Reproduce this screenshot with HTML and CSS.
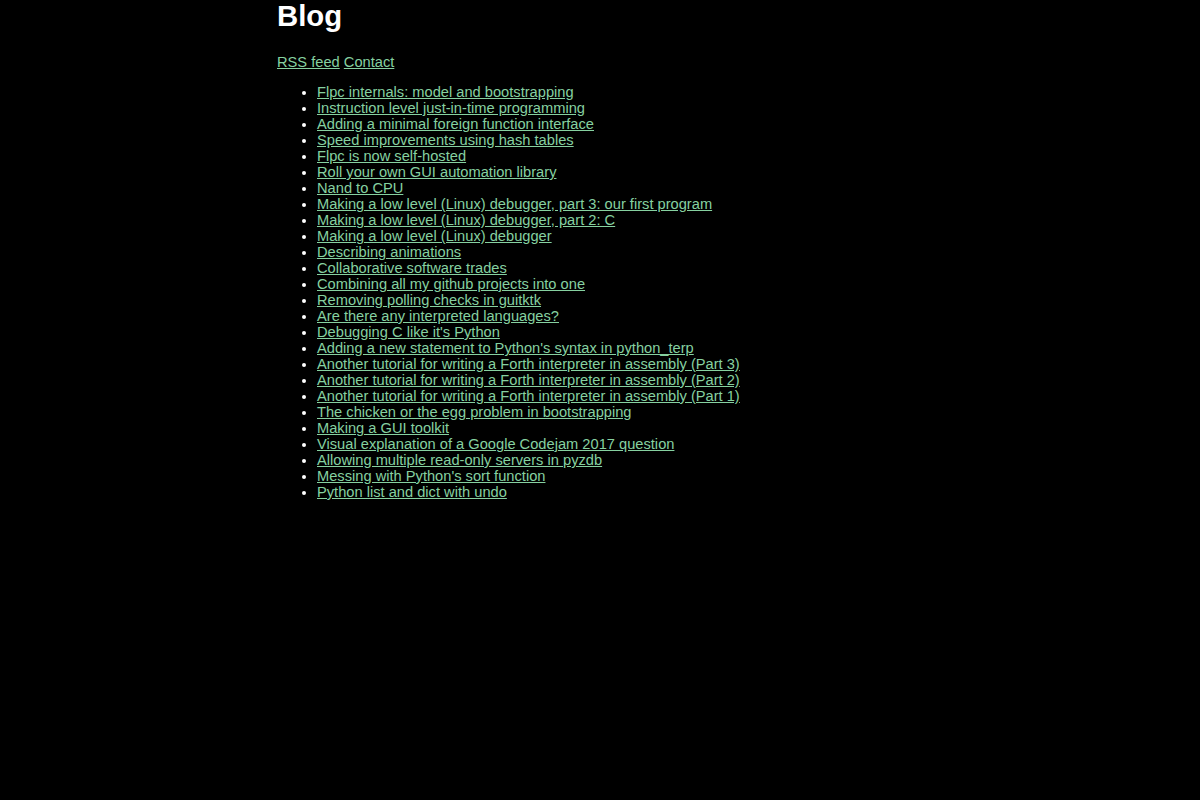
FILE: index.html
```html
<!DOCTYPE html>
<html>
<head>
<meta charset="utf-8">
<title>Blog</title>
<link rel="stylesheet" href="styles.css">
</head>
<body>
<div class="page">
<h1 class="title">Blog</h1>
<p class="nav"><a href="#">RSS feed</a> <a href="#">Contact</a></p>
<ul class="posts">
<li><a href="#">Flpc internals: model and bootstrapping</a></li>
<li><a href="#">Instruction level just-in-time programming</a></li>
<li><a href="#">Adding a minimal foreign function interface</a></li>
<li><a href="#">Speed improvements using hash tables</a></li>
<li><a href="#">Flpc is now self-hosted</a></li>
<li><a href="#">Roll your own GUI automation library</a></li>
<li><a href="#">Nand to CPU</a></li>
<li><a href="#">Making a low level (Linux) debugger, part 3: our first program</a></li>
<li><a href="#">Making a low level (Linux) debugger, part 2: C</a></li>
<li><a href="#">Making a low level (Linux) debugger</a></li>
<li><a href="#">Describing animations</a></li>
<li><a href="#">Collaborative software trades</a></li>
<li><a href="#">Combining all my github projects into one</a></li>
<li><a href="#">Removing polling checks in guitktk</a></li>
<li><a href="#">Are there any interpreted languages?</a></li>
<li><a href="#">Debugging C like it's Python</a></li>
<li><a href="#">Adding a new statement to Python's syntax in python_terp</a></li>
<li><a href="#">Another tutorial for writing a Forth interpreter in assembly (Part 3)</a></li>
<li><a href="#">Another tutorial for writing a Forth interpreter in assembly (Part 2)</a></li>
<li><a href="#">Another tutorial for writing a Forth interpreter in assembly (Part 1)</a></li>
<li><a href="#">The chicken or the egg problem in bootstrapping</a></li>
<li><a href="#">Making a GUI toolkit</a></li>
<li><a href="#">Visual explanation of a Google Codejam 2017 question</a></li>
<li><a href="#">Allowing multiple read-only servers in pyzdb</a></li>
<li><a href="#">Messing with Python's sort function</a></li>
<li><a href="#">Python list and dict with undo</a></li>
</ul>
</div>
</body>
</html>
```
FILE: styles.css
```css
html, body {
  margin: 0;
  padding: 0;
  background: #000;
}
body {
  color: #fff;
  font-family: "Liberation Sans", Arial, sans-serif;
  font-size: 14.667px;
  line-height: 16px;
}
.page {
  width: 646px;
  margin: 0 auto;
}
.title {
  font-size: 29.333px;
  line-height: 31px;
  margin: 0 0 23px 0;
  font-weight: bold;
}
.nav {
  margin: 0 0 14px 0;
}
a {
  color: #86d1a0;
  text-decoration: underline;
}
.posts {
  margin: 0;
  padding-left: 40px;
}
```
